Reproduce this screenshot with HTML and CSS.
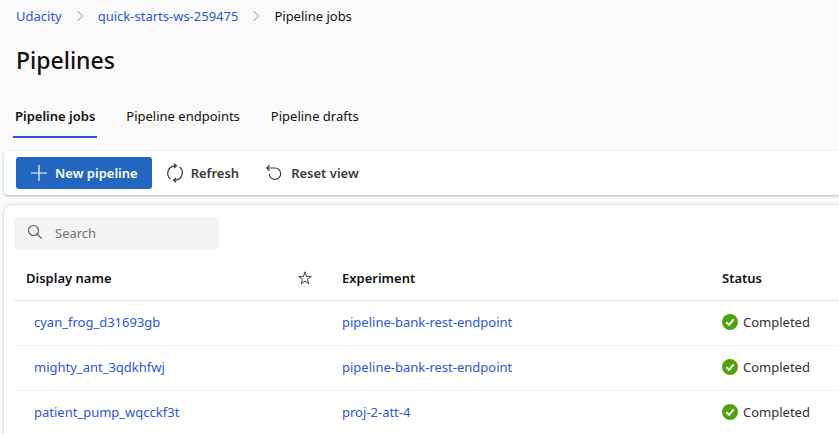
FILE: index.html
```
<!DOCTYPE html>
<html lang="en">
<head>
<meta charset="utf-8">
<title>Pipelines</title>
<link rel="stylesheet" href="styles.css">
</head>
<body>
<header class="page-header">
  <nav class="breadcrumb" aria-label="Breadcrumb">
    <a href="#">Udacity</a>
    <svg class="chevron" viewBox="0 0 8 12" aria-hidden="true"><path d="M1.5 1l5 5-5 5"/></svg>
    <a href="#">quick-starts-ws-259475</a>
    <svg class="chevron" viewBox="0 0 8 12" aria-hidden="true"><path d="M1.5 1l5 5-5 5"/></svg>
    <span>Pipeline jobs</span>
  </nav>
  <h1>Pipelines</h1>
  <nav class="tabs" aria-label="Pipeline views">
    <a class="tab active" href="#" aria-current="page">Pipeline jobs</a>
    <a class="tab" href="#">Pipeline endpoints</a>
    <a class="tab" href="#">Pipeline drafts</a>
  </nav>
</header>
<main>
  <div class="toolbar">
    <button class="command primary" type="button">
      <svg class="icon" viewBox="0 0 18 18" aria-hidden="true"><path d="M9 1v16M1 9h16"/></svg>
      New pipeline
    </button>
    <button class="command" type="button">
      <svg class="icon" viewBox="0 0 18 18" aria-hidden="true"><path d="M4.400 15A7.500 7.500 0 0 1 8.600 1.800H10.500M8 -.4l2.500 2.200L8 4M13.600 3A7.500 7.500 0 0 1 9.400 16.200H7.500M10 14l-2.500 2.200 2.500 2.200"/></svg>
      Refresh
    </button>
    <button class="command" type="button">
      <svg class="icon" viewBox="0 0 18 18" aria-hidden="true"><path d="M3.600 1.200L.8 4l2.800 2.800M.8 4h8.200a5.700 5.700 0 1 1-5.700 5.900"/></svg>
      Reset view
    </button>
  </div>
  <section class="panel">
    <label class="search">
      <svg class="icon" viewBox="0 0 16 16" aria-hidden="true"><circle cx="6.500" cy="5.500" r="5"/><path d="M10 9l4.700 4.700"/></svg>
      <input type="search" placeholder="Search" aria-label="Search">
    </label>
    <table>
      <colgroup><col class="col-name"><col class="col-star"><col class="col-experiment"><col></colgroup>
      <thead>
        <tr>
          <th scope="col">Display name</th>
          <th scope="col" aria-label="Favorite"><svg class="star" viewBox="0 0 14 14" aria-hidden="true"><path d="M7 .8l1.500 4.600h4.900L9.400 8.300l1.500 4.700L7 10.100 3.100 13l1.500-4.700L.6 5.400h4.900z"/></svg></th>
          <th scope="col">Experiment</th>
          <th scope="col">Status</th>
        </tr>
      </thead>
      <tbody>
        <tr>
          <td class="name"><a href="#">cyan_frog_d31693gb</a></td><td></td>
          <td><a href="#">pipeline-bank-rest-endpoint</a></td>
          <td><span class="status"><svg viewBox="0 0 16 16" aria-hidden="true"><circle cx="8" cy="8" r="8"/><path d="M4.300 8.200l2.700 2.700 4.700-5.500"/></svg>Completed</span></td>
        </tr>
        <tr>
          <td class="name"><a href="#">mighty_ant_3qdkhfwj</a></td><td></td>
          <td><a href="#">pipeline-bank-rest-endpoint</a></td>
          <td><span class="status"><svg viewBox="0 0 16 16" aria-hidden="true"><circle cx="8" cy="8" r="8"/><path d="M4.300 8.200l2.700 2.700 4.700-5.500"/></svg>Completed</span></td>
        </tr>
        <tr>
          <td class="name"><a href="#">patient_pump_wqcckf3t</a></td><td></td>
          <td><a href="#">proj-2-att-4</a></td>
          <td><span class="status"><svg viewBox="0 0 16 16" aria-hidden="true"><circle cx="8" cy="8" r="8"/><path d="M4.300 8.200l2.700 2.700 4.700-5.500"/></svg>Completed</span></td>
        </tr>
      </tbody>
    </table>
  </section>
</main>
</body>
</html>
```
FILE: styles.css
```
* { box-sizing: border-box; }
body {
  margin: 0;
  background: #fafafa;
  color: #111;
  font: 13px/20px "Noto Sans", "Open Sans", sans-serif;
  overflow-x: hidden;
}
a { color: #2b57d9; text-decoration: none; }
svg { display: block; flex: none; fill: none; overflow: visible; }
.page-header { padding: 6px 16px 0; }
.breadcrumb { display: flex; align-items: center; gap: 14px; }
.chevron { width: 8px; height: 12px; stroke: #8a8886; }
h1 { margin: 18px 0 0; font-size: 23px; line-height: 32px; font-weight: 500; }
.tabs { display: flex; gap: 27px; margin: 20px -3px 0; }
.tab { padding: 10px 2px; color: #111; border-bottom: 2px solid transparent; }
.tab.active { font-weight: 600; border-color: #2b57d9; }
main { padding: 13px 0 0 4px; }
.toolbar {
  display: flex;
  align-items: center;
  gap: 1px;
  height: 44px;
  padding: 0 12px;
  background: #fff;
  border-radius: 4px 0 0 4px;
  box-shadow: 0 1px 3px rgba(0, 0, 0, .28);
}
.command {
  display: flex;
  align-items: center;
  gap: 7px;
  height: 32px;
  padding: 0 13px;
  border: 0;
  border-radius: 3px;
  background: none;
  color: #3b3a39;
  font: inherit;
  font-weight: 600;
}
.primary { padding: 0 14px; background: #2266bf; color: #fff; }
.icon { width: 18px; height: 18px; stroke: currentColor; stroke-width: 1.2; }
.panel {
  margin-top: 10px;
  padding: 12px 0 0 10px;
  background: #fff;
  border-radius: 8px 0 0 0;
  box-shadow: 0 0 3px rgba(0, 0, 0, .25);
}
.search {
  display: flex;
  align-items: center;
  gap: 12px;
  width: 205px;
  height: 32px;
  padding: 0 13px;
  background: #f4f4f4;
  border-radius: 4px;
  color: #605e5c;
}
.search .icon { width: 16px; height: 16px; }
.search input {
  flex: 1;
  min-width: 0;
  padding: 0;
  border: 0;
  outline: 0;
  background: none;
  font: inherit;
}
.search input::placeholder { color: #707070; opacity: 1; }
table { width: 100%; margin-top: 7px; table-layout: fixed; border-collapse: separate; border-spacing: 0; }
.col-name { width: 272px; }
.col-star { width: 44px; }
.col-experiment { width: 380px; }
th, td { height: 45px; padding: 0 12px; border-bottom: 1px solid #f0f0f0; text-align: left; white-space: nowrap; }
th { font-weight: 600; border-color: #e4e4e4; }
td { padding-bottom: 2px; }
td.name { padding-left: 20px; }
.star { width: 14px; height: 14px; stroke: #444; }
.status { display: flex; align-items: center; gap: 5px; color: #323130; }
.status svg { width: 16px; height: 16px; }
.status circle { fill: #50a30f; }
.status path { stroke: #fff; stroke-width: 2; }
```
